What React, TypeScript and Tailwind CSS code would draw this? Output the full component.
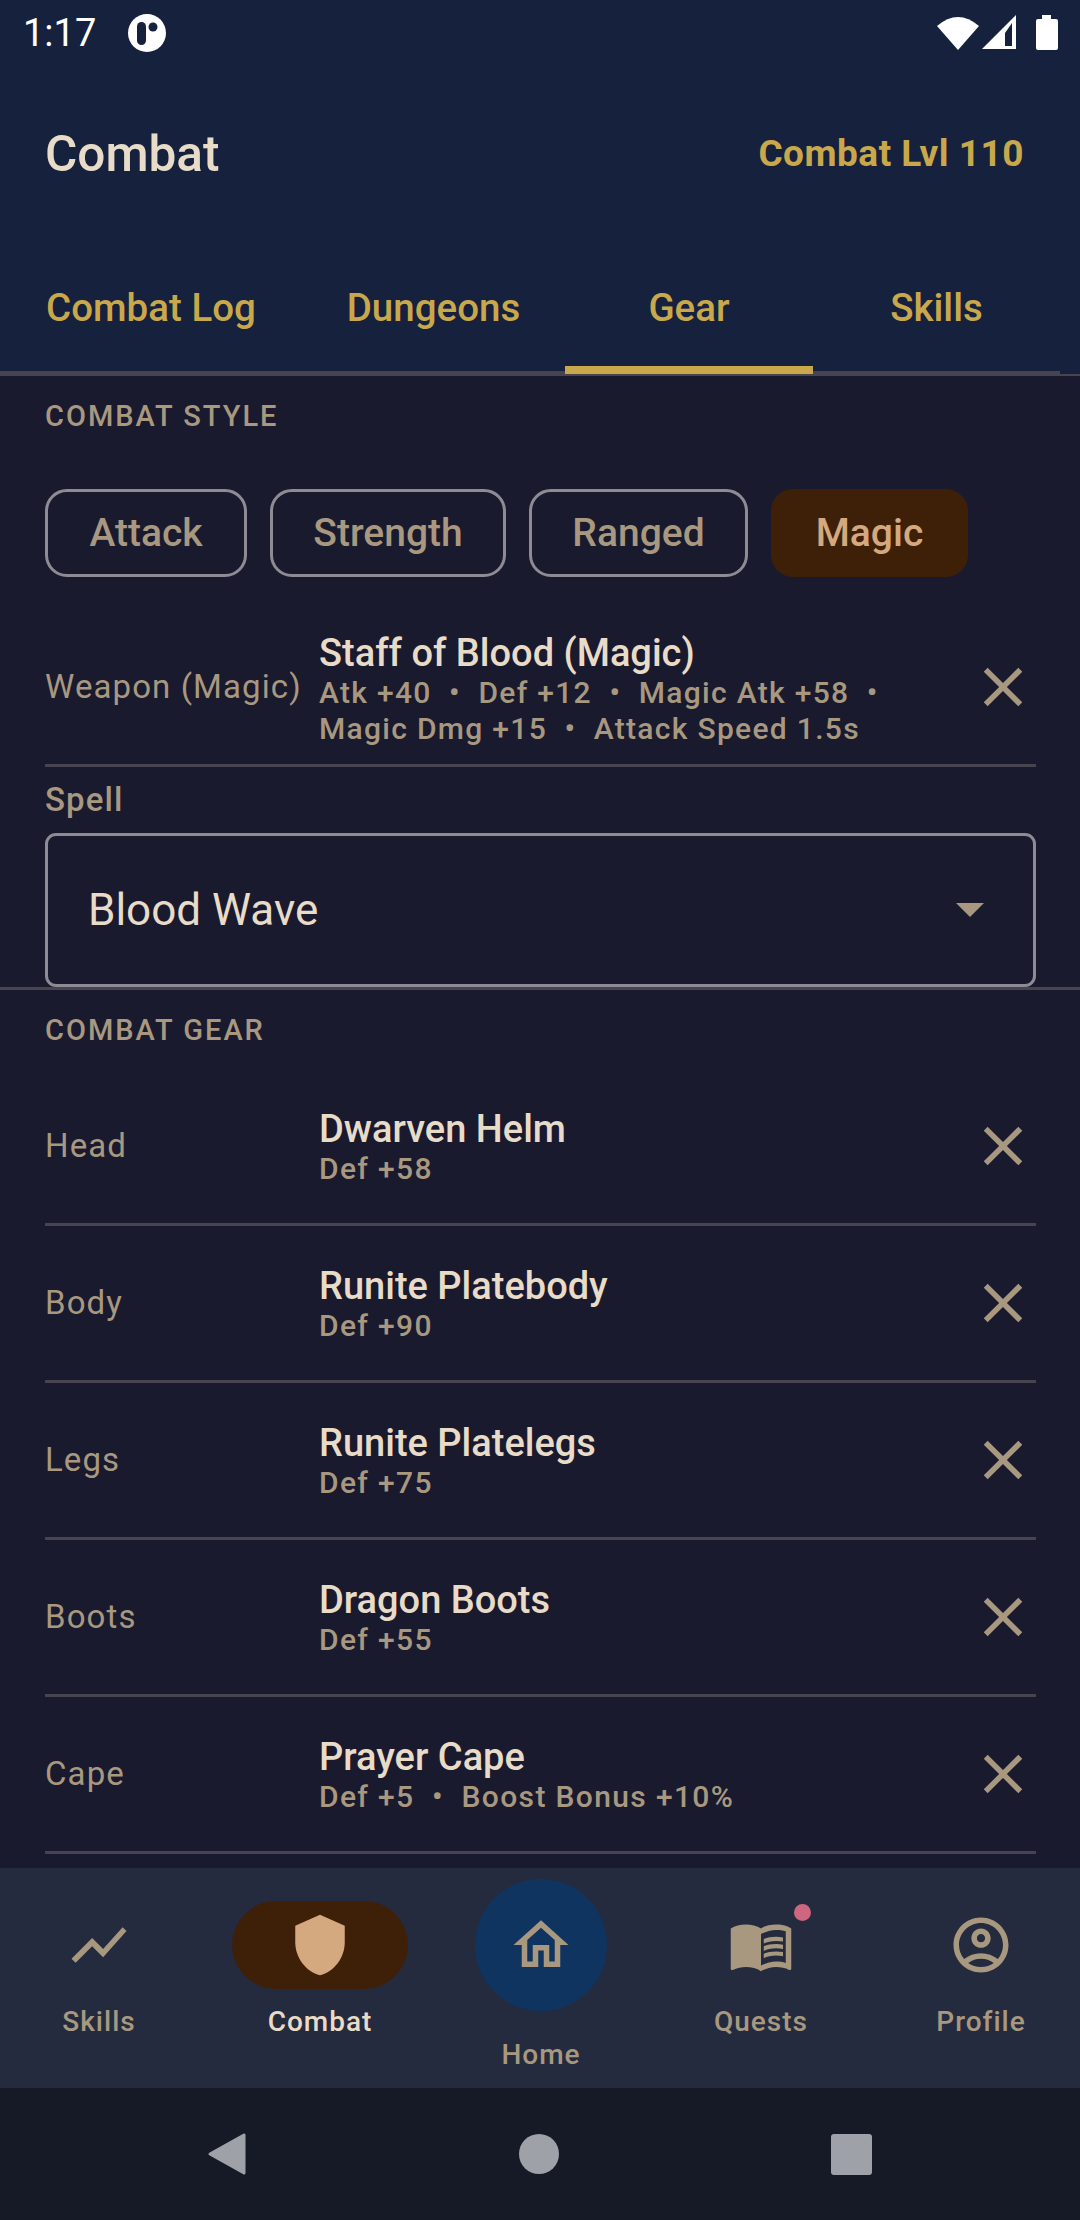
const FONT = "font-['Roboto',sans-serif]";

interface GearItem {
  slot: string;
  name: string;
  stats: string;
}

const GEAR: GearItem[] = [
  { slot: "Head", name: "Dwarven Helm", stats: "Def +58" },
  { slot: "Body", name: "Runite Platebody", stats: "Def +90" },
  { slot: "Legs", name: "Runite Platelegs", stats: "Def +75" },
  { slot: "Boots", name: "Dragon Boots", stats: "Def +55" },
  { slot: "Cape", name: "Prayer Cape", stats: "Def +5  •  Boost Bonus +10%" },
];

function Icon({ d, fill = "#a89880" }: { d: string; fill?: string }) {
  return (
    <svg width="66" height="66" viewBox="0 0 24 24" className="shrink-0">
      <path d={d} fill={fill} />
    </svg>
  );
}

const ICONS = {
  close: "M19 6.41L17.59 5 12 10.59 6.41 5 5 6.41 10.59 12 5 17.59 6.41 19 12 13.41 17.59 19 19 17.59 13.41 12z",
  chart: "M3.5 18.49l6-6.01 4 4L22 6.92l-1.41-1.41-7.09 7.97-4-4L2 16.99z",
  shield: "M12 1L3 5v6c0 5.55 3.84 10.74 9 12 5.16-1.26 9-6.45 9-12V5l-9-4z",
  home: "M12 5.69l5 4.5V18h-2v-6H9v6H7v-7.81l5-4.5M12 3L2 12h3v8h6v-6h2v6h6v-8h3L12 3z",
  book: "M21 5c-1.11-.35-2.33-.5-3.5-.5-1.95 0-4.05.4-5.5 1.5-1.45-1.1-3.55-1.5-5.5-1.5S2.45 4.9 1 6v14.65c0 .25.25.5.5.5.1 0 .15-.05.25-.05C3.1 20.45 5.05 20 6.5 20c1.95 0 4.05.4 5.5 1.5 1.35-.85 3.8-1.5 5.5-1.5 1.65 0 3.35.3 4.75 1.05.1.05.15.05.25.05.25 0 .5-.25.5-.5V6c-.6-.45-1.25-.75-2-1zm0 13.5c-1.1-.35-2.3-.5-3.5-.5-1.7 0-4.15.65-5.5 1.5V8c1.35-.85 3.8-1.5 5.5-1.5 1.2 0 2.4.15 3.5.5v11.5zM17.5 10.5c.88 0 1.73.09 2.5.26V9.24c-.79-.15-1.64-.24-2.5-.24-1.7 0-3.24.29-4.5.83v1.66c1.13-.64 2.7-.99 4.5-.99zM13 12.49v1.66c1.13-.64 2.7-.99 4.5-.99.88 0 1.73.09 2.5.26V11.9c-.79-.15-1.64-.24-2.5-.24-1.7 0-3.24.3-4.5.83zM17.5 14.33c-1.7 0-3.24.29-4.5.83v1.66c1.13-.64 2.7-.99 4.5-.99.88 0 1.73.09 2.5.26v-1.52c-.79-.16-1.64-.24-2.5-.24z",
  account: "M12 2C6.48 2 2 6.48 2 12s4.48 10 10 10 10-4.48 10-10S17.52 2 12 2zM7.35 18.5C8.66 17.56 10.26 17 12 17s3.34.56 4.65 1.5c-1.31.94-2.91 1.5-4.65 1.5s-3.34-.56-4.65-1.5zm10.79-1.38C16.45 15.8 14.32 15 12 15s-4.45.8-6.14 2.12C4.7 15.73 4 13.95 4 12c0-4.42 3.58-8 8-8s8 3.58 8 8c0 1.95-.7 3.73-1.86 5.12zM12 6c-1.93 0-3.5 1.57-3.5 3.5S10.07 13 12 13s3.5-1.57 3.5-3.5S13.93 6 12 6zm0 5c-.83 0-1.5-.67-1.5-1.5S11.17 8 12 8s1.5.67 1.5 1.5S12.83 11 12 11z",
};

function StatusBar() {
  return (
    <div className="h-[66px] flex items-center justify-between pl-[23px] pr-[22px] text-white">
      <div className="flex items-center gap-[32px]">
        <span className="text-[38px] leading-none">1:17</span>
        <svg width="38" height="38" viewBox="0 0 38 38">
          <circle cx="19" cy="19" r="19" fill="#fff" />
          <rect x="9" y="8" width="9" height="23" rx="4.5" fill="#16213e" />
          <circle cx="25" cy="13" r="4.5" fill="#16213e" />
        </svg>
      </div>
      <div className="flex items-center">
        <svg width="42" height="36" viewBox="0 0 42 36">
          <path d="M0 11 Q21 -7 42 11 L21 35Z" fill="#fff" />
        </svg>
        <svg width="34" height="36" viewBox="0 0 34 36" className="ml-[3px]">
          <path d="M0 34 L34 0 V34Z" fill="#fff" />
          <path d="M23 18 L30 8 V31 H23Z" fill="#16213e" />
        </svg>
        <svg width="22" height="36" viewBox="0 0 22 36" className="ml-[20px]">
          <path d="M6 0 H15 V4 H20 Q22 4 22 6 V33 Q22 35 20 35 H2 Q0 35 0 33 V6 Q0 4 2 4 H6Z" fill="#fff" />
        </svg>
      </div>
    </div>
  );
}

function Tabs() {
  const tabs = [
    { label: "Combat Log", w: "w-[302px]" },
    { label: "Dungeons", w: "w-[263px]" },
    { label: "Gear", w: "w-[248px]", active: true },
    { label: "Skills", w: "w-[247px]" },
  ];
  return (
    <div className="relative h-[154px]">
      <div className="flex h-[154px]">
        {tabs.map((t) => (
          <div key={t.label} className={`${t.w} relative flex items-start justify-center pt-[64px]`}>
            <span className="text-[38.5px] leading-[43px] font-medium text-[#c9a84c]">{t.label}</span>
            {t.active && <div className="absolute left-0 right-0 top-[144px] h-[8px] bg-[#c9a84c] z-10" />}
          </div>
        ))}
      </div>
      <div className="absolute left-0 top-[149px] w-[1060px] h-[3px] bg-[#47444f]" />
      <div className="absolute left-0 right-0 top-[152px] h-[2px] bg-[#47444f]" />
    </div>
  );
}

function Chip({ label, width, active }: { label: string; width: string; active?: boolean }) {
  return (
    <div
      className={`${width} h-[88px] rounded-[22px] flex items-center justify-center text-[39px] font-medium ${
        active ? "bg-[#3e2009] text-[#d4a97f]" : "border-[3px] border-[#8f8b95] text-[#a89880]"
      }`}
    >
      {label}
    </div>
  );
}

function GearRow({ item }: { item: GearItem }) {
  return (
    <div className="h-[157px] ml-[45px] mr-[44px] border-b-[3px] border-[#47444f] flex items-center">
      <div className="w-[274px] text-[33px] tracking-[1.1px] text-[#a89880]">{item.slot}</div>
      <div className="flex-1 mt-[2px]">
        <div className="text-[38px] leading-[44px] font-medium text-[#e8dcc8]">{item.name}</div>
        <div className="text-[30px] leading-[36px] font-medium tracking-[1.35px] text-[#a89880] whitespace-pre">{item.stats}</div>
      </div>
      <Icon d={ICONS.close} />
    </div>
  );
}

function NavItem({ label, width, icon, active }: { label: string; width: string; icon: string; active?: boolean }) {
  return (
    <div className={`${width} flex flex-col items-center pt-[33px]`}>
      <div className={`w-[176px] h-[88px] rounded-full flex items-center justify-center ${active ? "bg-[#3e2009]" : ""}`}>
        <Icon d={icon} fill={active ? "#d4a97f" : "#a89880"} />
      </div>
      <span className={`mt-[12px] ${active ? "text-[#e8dcc8]" : ""}`}>{label}</span>
    </div>
  );
}

function BottomNav() {
  return (
    <div className="relative h-[220px] bg-[#252b3f] flex text-[28px] font-medium tracking-[1px] text-[#a89880]">
      <NavItem label="Skills" width="w-[198px]" icon={ICONS.chart} />
      <NavItem label="Combat" width="w-[244px]" icon={ICONS.shield} active />
      <div className="w-[198px] flex flex-col items-center pt-[11px]">
        <div className="w-[132px] h-[132px] rounded-full bg-[#0f3460] flex items-center justify-center">
          <Icon d={ICONS.home} />
        </div>
        <span className="mt-[23px]">Home</span>
      </div>
      <NavItem label="Quests" width="w-[242px]" icon={ICONS.book} />
      <NavItem label="Profile" width="w-[198px]" icon={ICONS.account} />
      <div className="absolute left-[794px] top-[36px] w-[17px] h-[17px] rounded-full bg-[#cf667f]" />
    </div>
  );
}

function SystemNav() {
  return (
    <div className="h-[132px] bg-[#151a26] flex items-center justify-center gap-[272px] pr-[2px]">
      <svg width="40" height="44" viewBox="0 0 40 44">
        <path d="M37 3 V41 L3 22Z" fill="#9fa1a9" stroke="#9fa1a9" strokeWidth="3" strokeLinejoin="round" />
      </svg>
      <div className="w-[40px] h-[40px] rounded-full bg-[#9fa1a9]" />
      <div className="w-[41px] h-[41px] rounded-[3px] bg-[#9fa1a9]" />
    </div>
  );
}

export default function App() {
  return (
    <div className={`w-[1080px] h-[2220px] overflow-hidden bg-[#1a1a2e] flex flex-col ${FONT}`}>
      <div className="bg-[#16213e] shrink-0">
        <StatusBar />
        <div className="h-[156px] flex items-center justify-between pl-[45px] pr-[56px] pt-[20px]">
          <span className="text-[49.5px] font-medium text-[#e8dcc8]">Combat</span>
          <span className="text-[37px] font-bold tracking-[0.5px] text-[#c9a84c]">Combat Lvl 110</span>
        </div>
        <Tabs />
      </div>

      <div className="flex-1 overflow-hidden">
        <div className="h-[80px] pt-[2px] px-[45px] flex items-center text-[29px] font-medium tracking-[2px] text-[#a89880]">
          COMBAT STYLE
        </div>
        <div className="px-[45px] pt-[33px] flex gap-[23px]">
          <Chip label="Attack" width="w-[202px]" />
          <Chip label="Strength" width="w-[236px]" />
          <Chip label="Ranged" width="w-[219px]" />
          <Chip label="Magic" width="w-[197px]" active />
        </div>

        <div className="ml-[45px] mr-[44px] mt-[36px] h-[154px] border-b-[3px] border-[#47444f] flex items-center">
          <div className="w-[274px] mb-[3px] text-[33px] tracking-[1.1px] text-[#a89880] whitespace-nowrap">Weapon (Magic)</div>
          <div className="flex-1">
            <div className="text-[38px] leading-[44px] font-medium text-[#e8dcc8]">Staff of Blood (Magic)</div>
            <div className="text-[30px] leading-[36px] font-medium tracking-[1.3px] text-[#a89880] whitespace-pre">
              {"Atk +40  •  Def +12  •  Magic Atk +58  •\nMagic Dmg +15  •  Attack Speed 1.5s"}
            </div>
          </div>
          <div className="mb-[3px] flex">
            <Icon d={ICONS.close} />
          </div>
        </div>

        <div className="h-[66px] px-[45px] flex items-center text-[33px] font-medium tracking-[1.1px] text-[#a89880]">Spell</div>
        <div className="ml-[45px] mr-[44px] h-[154px] rounded-[11px] border-[3px] border-[#8f8b95] flex items-center justify-between pl-[40px] pr-[49px]">
          <span className="text-[44px] text-[#e8dcc8]">Blood Wave</span>
          <div className="w-0 h-0 border-x-[14px] border-x-transparent border-t-[14px] border-t-[#a89880]" />
        </div>

        <div className="h-[3px] bg-[#47444f]" />
        <div className="h-[79px] pt-[2px] px-[45px] flex items-center text-[29px] font-medium tracking-[2px] text-[#a89880]">COMBAT GEAR</div>
        {GEAR.map((g) => (
          <GearRow key={g.slot} item={g} />
        ))}
      </div>

      <BottomNav />
      <SystemNav />
    </div>
  );
}
